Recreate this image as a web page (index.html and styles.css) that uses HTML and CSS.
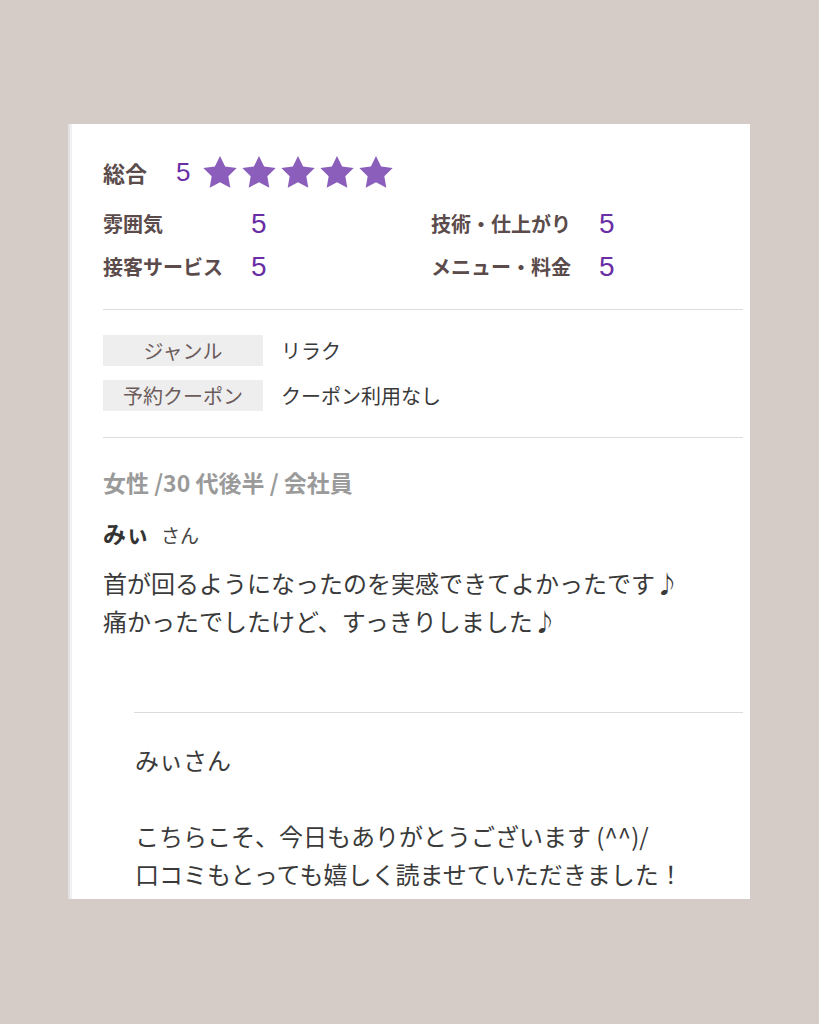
FILE: index.html
```html
<!DOCTYPE html>
<html lang="ja">
<head>
<meta charset="utf-8">
<link rel="stylesheet" href="styles.css">
</head>
<body>
<div class="card">
  <div class="total">
    <span class="total-label">総合</span>
    <span class="total-num">5</span>
    <span class="stars">
      <svg class="star" viewBox="2 2 20 19.2"><polygon points="12 2 15.09 8.26 22 9.27 17 14.14 18.18 21.02 12 17.77 5.82 21.02 7 14.14 2 9.27 8.91 8.26"/></svg>
      <svg class="star" viewBox="2 2 20 19.2"><polygon points="12 2 15.09 8.26 22 9.27 17 14.14 18.18 21.02 12 17.77 5.82 21.02 7 14.14 2 9.27 8.91 8.26"/></svg>
      <svg class="star" viewBox="2 2 20 19.2"><polygon points="12 2 15.09 8.26 22 9.27 17 14.14 18.18 21.02 12 17.77 5.82 21.02 7 14.14 2 9.27 8.91 8.26"/></svg>
      <svg class="star" viewBox="2 2 20 19.2"><polygon points="12 2 15.09 8.26 22 9.27 17 14.14 18.18 21.02 12 17.77 5.82 21.02 7 14.14 2 9.27 8.91 8.26"/></svg>
      <svg class="star" viewBox="2 2 20 19.2"><polygon points="12 2 15.09 8.26 22 9.27 17 14.14 18.18 21.02 12 17.77 5.82 21.02 7 14.14 2 9.27 8.91 8.26"/></svg>
    </span>
  </div>
  <div class="scores">
    <div class="score-col left">
      <span class="s-label">雰囲気</span><span class="s-num">5</span>
      <span class="s-label">接客サービス</span><span class="s-num">5</span>
    </div>
    <div class="score-col">
      <span class="s-label">技術・仕上がり</span><span class="s-num">5</span>
      <span class="s-label">メニュー・料金</span><span class="s-num">5</span>
    </div>
  </div>
  <div class="rule"></div>
  <div class="info">
    <div class="info-row"><span class="info-label">ジャンル</span><span class="info-value">リラク</span></div>
    <div class="info-row"><span class="info-label">予約クーポン</span><span class="info-value">クーポン利用なし</span></div>
  </div>
  <div class="rule"></div>
  <div class="profile">女性 /30 代後半 / 会社員</div>
  <div class="name"><span class="name-main">みぃ</span><span class="name-san">さん</span></div>
  <p class="comment">首が回るようになったのを実感できてよかったです♪<br>痛かったでしたけど、すっきりしました♪</p>
  <div class="reply">
    <div class="rule"></div>
    <p class="reply-text">みぃさん<br><br>こちらこそ、今日もありがとうございます (^^)/<br>口コミもとっても嬉しく読ませていただきました！</p>
  </div>
</div>
</body>
</html>
```

FILE: styles.css
```css
html, body {
  margin: 0;
  padding: 0;
}
body {
  background: #d6ccc7;
  height: 1024px;
  padding-top: 124px;
  box-sizing: border-box;
  font-family: "Noto Sans CJK JP", "Noto Sans", sans-serif;
}
.card {
  margin-left: 68px;
  width: 682px;
  height: 775px;
  box-sizing: border-box;
  background: #ffffff;
  border-left: 2px solid #e2e2e2;
  box-shadow: inset 2px 0 0 #f1f1f1;
  padding: 28px 7px 0 33px;
  overflow: hidden;
}
.total {
  display: flex;
  align-items: center;
  height: 40px;
}
.total-label {
  width: 73px;
  font-size: 22px;
  font-weight: 700;
  color: #5b4b4b;
}
.total-num {
  font-family: "Liberation Sans", Arial, sans-serif;
  font-size: 26px;
  color: #6a2ea5;
  width: 27px;
}
.stars {
  display: flex;
  gap: 5px;
}
.star {
  width: 34px;
  height: 32px;
  display: block;
}
.star polygon {
  fill: #8a5eba;
}
.scores {
  display: flex;
  margin-top: 10px;
}
.score-col {
  display: grid;
  grid-template-columns: max-content max-content;
  grid-auto-rows: 43px;
  column-gap: 28px;
  align-items: center;
}
.score-col.left {
  width: 328px;
}
.s-label {
  font-size: 20px;
  font-weight: 700;
  color: #5b4b4b;
}
.s-num {
  font-family: "Liberation Sans", Arial, sans-serif;
  font-size: 28px;
  color: #6a2ea5;
}
.rule {
  height: 1px;
  background: #dcdcdc;
}
.scores + .rule {
  margin-top: 21px;
}
.info {
  display: flex;
  flex-direction: column;
  gap: 14px;
  padding: 25px 0 26px;
}
.info-row {
  display: flex;
  align-items: center;
  gap: 18px;
}
.info-label {
  width: 160px;
  height: 31px;
  background: #eeeeee;
  color: #6b5b5b;
  font-size: 20px;
  display: flex;
  align-items: center;
  justify-content: center;
}
.info-value {
  font-size: 20px;
  color: #3a3a3a;
}
.profile {
  margin-top: 29px;
  font-size: 23px;
  line-height: 30px;
  font-weight: 700;
  color: #9a9a9a;
}
.name {
  margin-top: 21px;
  line-height: 30px;
  display: flex;
  align-items: baseline;
  gap: 12px;
}
.name-main {
  font-size: 23px;
  font-weight: 700;
  color: #333;
}
.name-san {
  font-size: 19px;
  color: #444;
}
.comment {
  margin: 14px 0 0;
  font-size: 24px;
  line-height: 38px;
  color: #3a3a3a;
}
.reply {
  margin-top: 72px;
  margin-left: 31px;
}
.reply-text {
  margin: 28px 0 0 1px;
  font-size: 24px;
  line-height: 38px;
  color: #3a3a3a;
}
```
